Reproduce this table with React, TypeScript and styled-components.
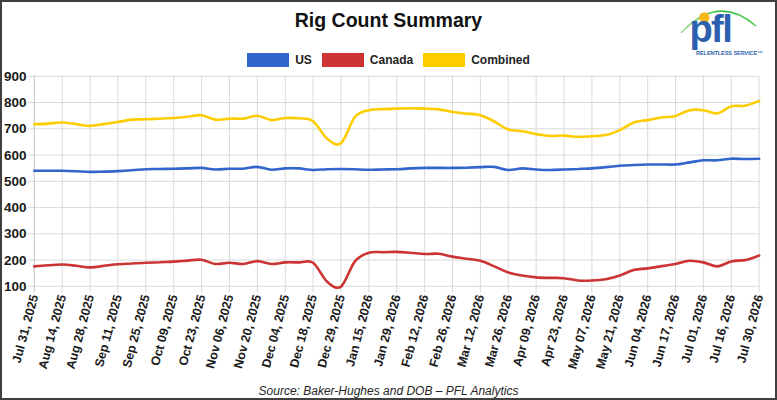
import styled, { createGlobalStyle } from "styled-components";

const GlobalStyle = createGlobalStyle`
  body {
    margin: 0;
    background: #ffffff;
    font-family: "Liberation Sans", Arial, sans-serif;
  }
`;

const colors = {
  us: "#3366cc",
  canada: "#cc3333",
  combined: "#ffcc00",
  grid: "#d9d9d9",
  text: "#1a1a1a",
  logoBlue: "#2c5fae",
};

const Frame = styled.div`
  position: relative;
  width: 777px;
  height: 400px;
  box-sizing: border-box;
  border: 2px solid #404040;
  background: #ffffff;
  display: flex;
  flex-direction: column;
  overflow: hidden;
`;

const Title = styled.h1`
  margin: 0;
  padding-top: 7px;
  line-height: 22px;
  font-size: 19.5px;
  font-weight: 700;
  text-align: center;
  color: #111111;
`;

const Legend = styled.div`
  display: flex;
  justify-content: center;
  align-items: center;
  gap: 10px;
  padding-top: 22px;
  height: 14px;
`;

const LegendItem = styled.div`
  display: flex;
  align-items: center;
  gap: 6px;
`;

const Swatch = styled.span<{ $color: string }>`
  width: 42px;
  height: 14px;
  background: ${(p) => p.$color};
`;

const LegendLabel = styled.span`
  font-size: 12px;
  font-weight: 700;
  line-height: 14px;
  color: #222222;
`;

const ChartSvg = styled.svg`
  display: block;
  flex: 1;
  width: 773px;
`;

const AxisText = styled.text`
  font-family: "Liberation Sans", Arial, sans-serif;
  font-weight: 700;
  fill: ${colors.text};
`;

const Source = styled.div`
  height: 12px;
  line-height: 12px;
  padding-bottom: 1px;
  font-size: 12px;
  font-style: italic;
  text-align: center;
  color: #262626;
`;

const LogoWrap = styled.div`
  position: absolute;
  top: 2px;
  right: 6px;
  width: 92px;
  height: 54px;
`;

const LogoText = styled.text`
  font-family: "Liberation Sans", Arial, sans-serif;
  font-weight: 700;
  fill: ${colors.logoBlue};
`;

const labels = [
  "Jul 31, 2025", "Aug 14, 2025", "Aug 28, 2025", "Sep 11, 2025", "Sep 25, 2025",
  "Oct 09, 2025", "Oct 23, 2025", "Nov 06, 2025", "Nov 20, 2025", "Dec 04, 2025",
  "Dec 18, 2025", "Dec 29, 2025", "Jan 15, 2026", "Jan 29, 2026", "Feb 12, 2026",
  "Feb 26, 2026", "Mar 12, 2026", "Mar 26, 2026", "Apr 09, 2026", "Apr 23, 2026",
  "May 07, 2026", "May 21, 2026", "Jun 04, 2026", "Jun 17, 2026", "Jul 01, 2026",
  "Jul 16, 2026", "Jul 30, 2026",
];

// one value every half label step
const combined = [
  717, 720, 724, 718, 711, 718, 726, 735, 736, 739, 741, 746, 752, 735, 739, 739,
  750, 733, 741, 740, 729, 663, 645, 745, 771, 775, 777, 778, 777, 774, 764, 758,
  752, 728, 697, 691, 680, 673, 674, 669, 672, 676, 695, 724, 733, 743, 749, 771,
  771, 759, 786, 788, 806,
];
const us = [
  540, 540, 540, 538, 536, 537, 539, 542, 546, 547, 548, 549, 551, 545, 548, 548,
  555, 544, 549, 549, 543, 546, 547, 546, 544, 545, 546, 549, 551, 551, 551, 552,
  554, 555, 543, 549, 545, 543, 545, 547, 549, 554, 559, 562, 564, 564, 564, 572,
  580, 580, 586, 585, 586,
];
const canada = [
  176, 180, 183, 178, 172, 178, 184, 187, 190, 192, 194, 198, 201, 185, 190, 185,
  196, 185, 191, 191, 190, 118, 99, 195, 228, 230, 231, 228, 223, 224, 213, 205,
  197, 176, 153, 141, 134, 132, 131, 122, 122, 127, 141, 162, 168, 177, 185, 197,
  191, 176, 195, 200, 217,
];

const X0 = 34.3;
const DX = 27.88;
const PLOT_BOTTOM = 286.3;
const xOf = (i: number) => X0 + i * DX;
const yOf = (v: number) => PLOT_BOTTOM - (v - 100) * 0.2625;

const smoothPath = (values: number[]) => {
  const pts = values.map((v, k) => ({ x: xOf(k / 2), y: yOf(v) }));
  let d = `M${pts[0].x.toFixed(1)},${pts[0].y.toFixed(1)}`;
  for (let i = 0; i < pts.length - 1; i++) {
    const p0 = pts[i - 1] || pts[i];
    const p1 = pts[i];
    const p2 = pts[i + 1];
    const p3 = pts[i + 2] || p2;
    const c1x = p1.x + (p2.x - p0.x) / 6;
    const c1y = p1.y + (p2.y - p0.y) / 6;
    const c2x = p2.x - (p3.x - p1.x) / 6;
    const c2y = p2.y - (p3.y - p1.y) / 6;
    d += ` C${c1x.toFixed(1)},${c1y.toFixed(1)} ${c2x.toFixed(1)},${c2y.toFixed(1)} ${p2.x.toFixed(1)},${p2.y.toFixed(1)}`;
  }
  return d;
};

const series = [
  { name: "US", color: colors.us, data: us },
  { name: "Canada", color: colors.canada, data: canada },
  { name: "Combined", color: colors.combined, data: combined },
];

const yTicks = [100, 200, 300, 400, 500, 600, 700, 800, 900];

const Logo = () => (
  <LogoWrap>
    <svg width="92" height="54" viewBox="677 4 92 54">
      <defs>
        <linearGradient id="arc" x1="0" x2="1" y1="0" y2="0">
          <stop offset="0" stopColor="#9be08f" />
          <stop offset="0.5" stopColor="#3cbf3c" />
          <stop offset="1" stopColor="#52c852" />
        </linearGradient>
      </defs>
      <path d="M681,33 Q718,-7 756,26" fill="none" stroke="url(#arc)" strokeWidth="1.6" />
      <circle cx="704.3" cy="17.5" r="5.2" fill="#f6b81a" />
      <LogoText x="689.5" y="41.5" fontSize="38" letterSpacing="-1.6">pfl</LogoText>
      <LogoText x="696" y="55" fontSize="5.6" letterSpacing="-0.1">RELENTLESS SERVICE™</LogoText>
    </svg>
  </LogoWrap>
);

const App = () => (
  <>
    <GlobalStyle />
    <Frame>
      <Title>Rig Count Summary</Title>
      <Legend>
        {series.map((s) => (
          <LegendItem key={s.name}>
            <Swatch $color={s.color} />
            <LegendLabel>{s.name}</LegendLabel>
          </LegendItem>
        ))}
      </Legend>
      <ChartSvg viewBox="2 67 773 318" preserveAspectRatio="none">
        {yTicks.map((v) => (
          <line key={`h${v}`} x1={28} x2={759.5} y1={yOf(v)} y2={yOf(v)} stroke={colors.grid} strokeWidth={1} />
        ))}
        {labels.map((_, i) => (
          <line
            key={`v${i}`}
            x1={xOf(i)}
            x2={xOf(i)}
            y1={yOf(900)}
            y2={PLOT_BOTTOM + 6}
            stroke={i === 0 ? "#c4c4c4" : colors.grid}
            strokeWidth={1}
          />
        ))}
        {yTicks.map((v) => (
          <AxisText key={`yl${v}`} x={26.5} y={yOf(v) + 4.6} fontSize={13.5} textAnchor="end">
            {v}
          </AxisText>
        ))}
        {labels.map((label, i) => {
          const x = xOf(i) + 4;
          const y = 296;
          return (
            <AxisText
              key={label}
              x={x}
              y={y}
              fontSize={12.5}
              textAnchor="end"
              transform={`rotate(-75 ${x} ${y})`}
            >
              {label}
            </AxisText>
          );
        })}
        {series.map((s) => (
          <path
            key={s.name}
            d={smoothPath(s.data)}
            fill="none"
            stroke={s.color}
            strokeWidth={2.6}
            strokeLinejoin="round"
            strokeLinecap="round"
          />
        ))}
      </ChartSvg>
      <Source>Source: Baker-Hughes and DOB – PFL Analytics</Source>
      <Logo />
    </Frame>
  </>
);

export default App;
